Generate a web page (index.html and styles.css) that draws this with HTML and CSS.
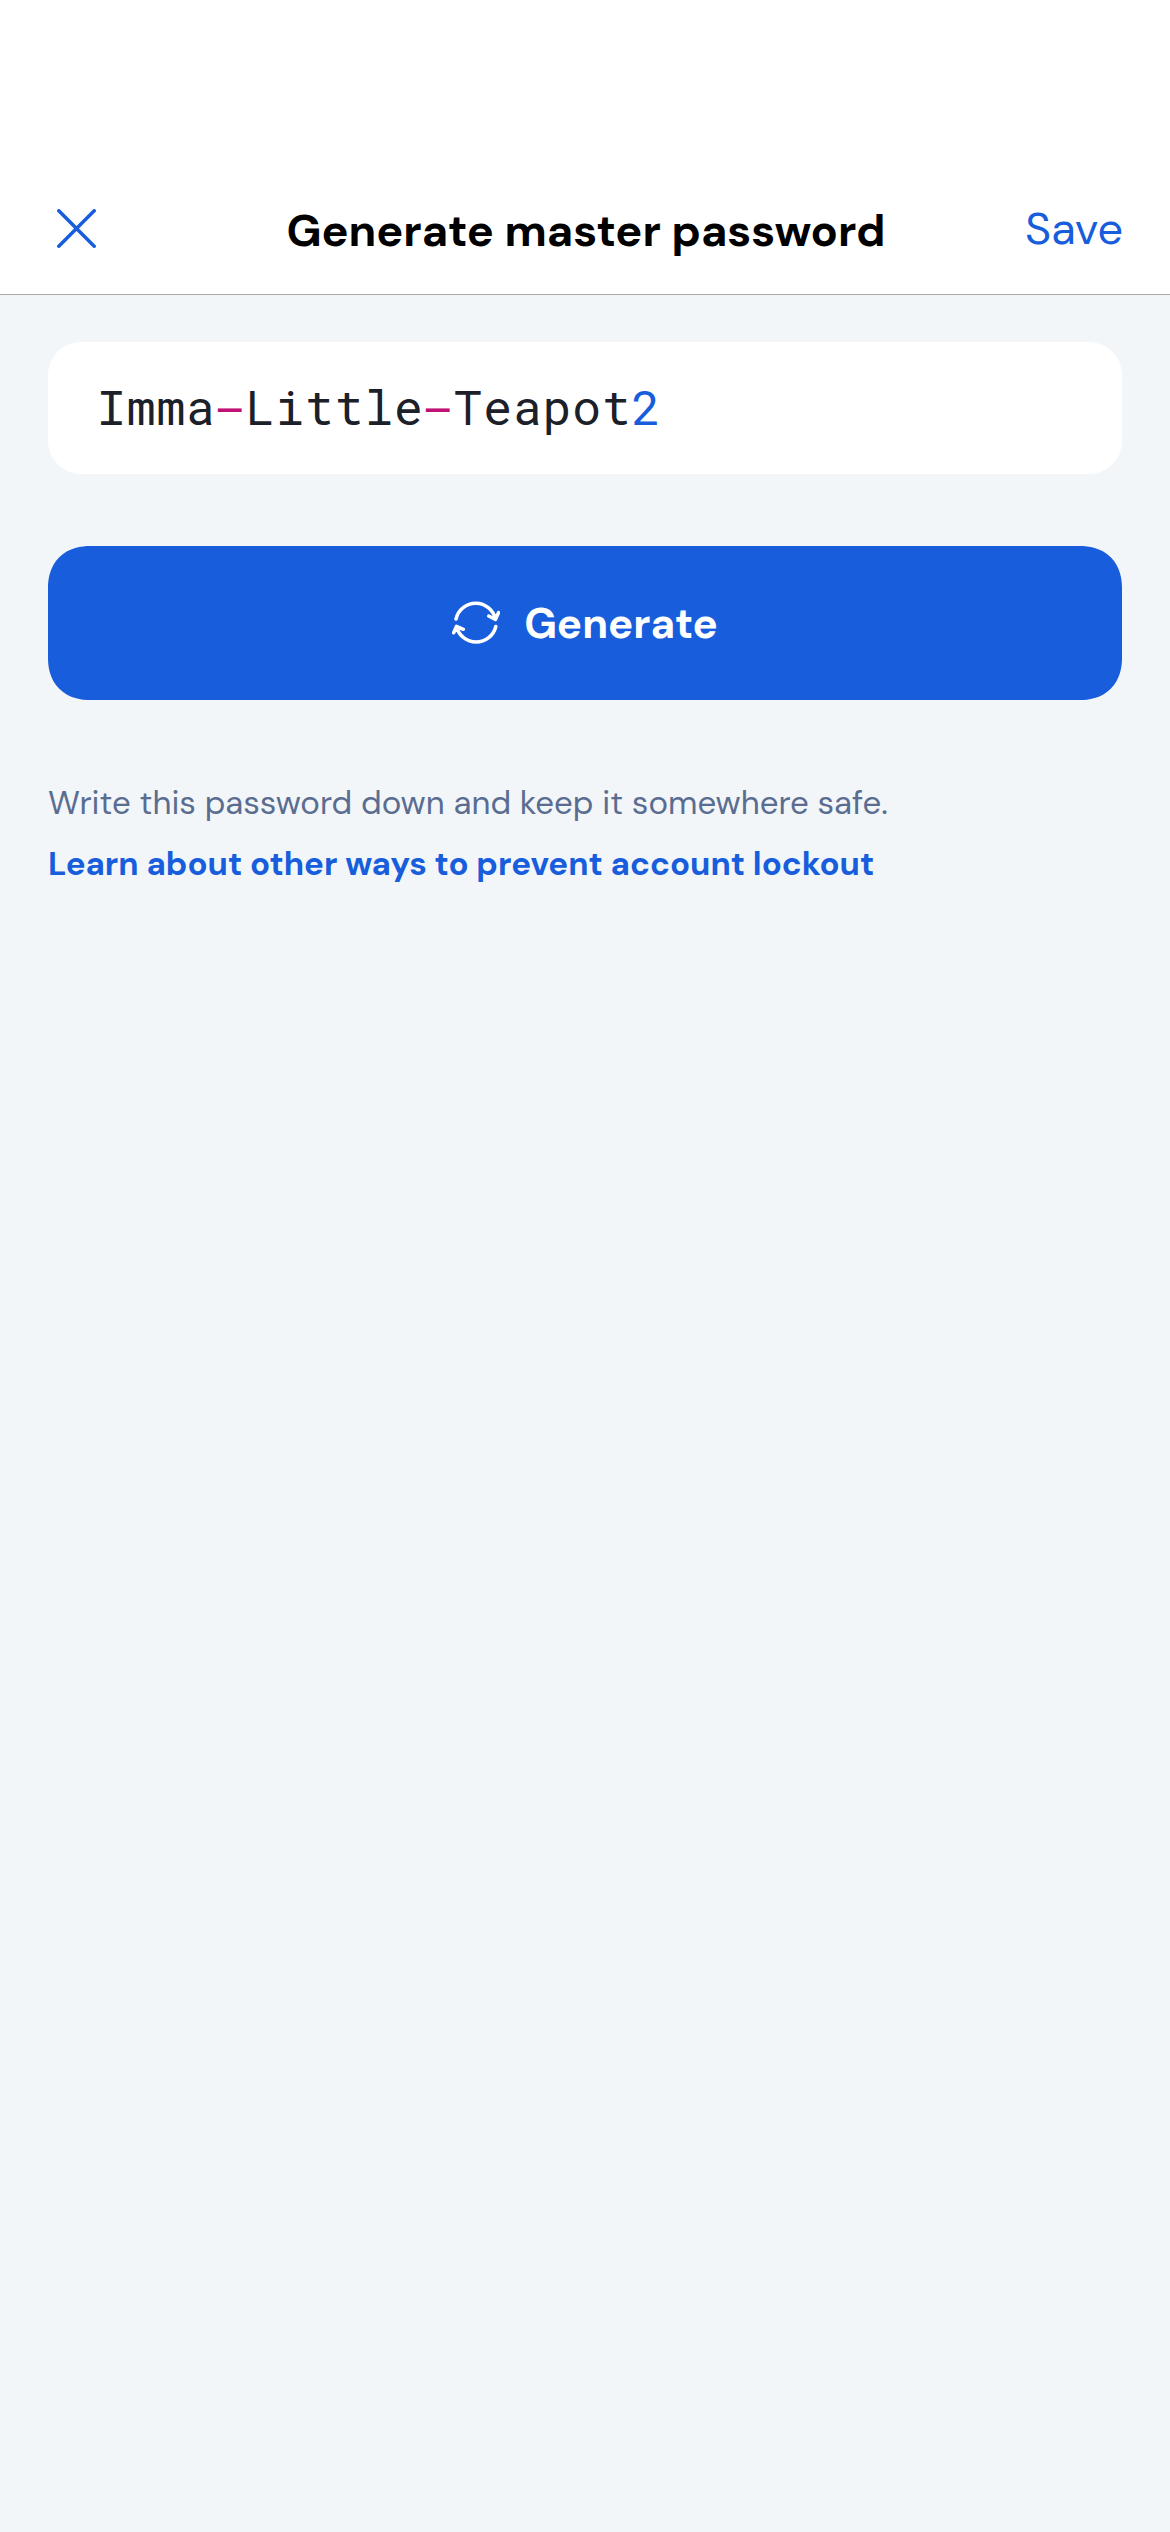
FILE: index.html
```html
<!DOCTYPE html>
<html lang="en">
<head>
<meta charset="utf-8">
<title>Generate master password</title>
<link rel="stylesheet" href="styles.css">
</head>
<body>
<header class="header">
  <button class="close" aria-label="Close"><svg width="39" height="39" viewBox="0 0 39 39"><path d="M1.8 1.8L37.2 37.2M37.2 1.8L1.8 37.2"/></svg></button>
  <h1 class="title">Generate master password</h1>
  <button class="save">Save</button>
</header>
<main class="content">
  <div class="password"><span>Imma<b class="symbol">-</b>Little<b class="symbol">-</b>Teapot<b class="digit">2</b></span></div>
  <button class="generate">
    <svg width="48" height="44" viewBox="0 0 48 44"><path d="M4 18A20.2 20.2 0 0 1 43.5 18.5M36.8 15L43.4 18.5L46.6 11.6M43.8 25.5A20.2 20.2 0 0 1 4.5 25.5M1.7 31.8L4.5 25.3L11.3 28.3"/></svg>
    <span>Generate</span>
  </button>
  <p class="note">Write this password down and keep it somewhere safe.</p>
  <a class="link">Learn about other ways to prevent account lockout</a>
</main>
</body>
</html>
```
FILE: styles.css
```css
* { box-sizing: border-box; }
body { margin: 0; min-height: 2532px; background: #f2f6f9; font-family: "DM Sans", Inter, sans-serif; }
button { border: 0; padding: 0; background: none; font: inherit; }
svg { display: block; fill: none; stroke: currentColor; stroke-width: 3.5; stroke-linecap: round; stroke-linejoin: round; }
.header { height: 295px; padding: 162px 47px 0 48px; display: grid; grid-template-columns: 200px 1fr 199px; align-items: center; background: #fff; border-bottom: 1px solid #a7a9ab; }
.close { padding-left: 9px; color: #175ddc; }
.title { margin: 0; padding-top: 6px; text-align: center; font-size: 45px; line-height: 54px; font-weight: 700; white-space: nowrap; }
.save { padding-top: 2px; text-align: right; color: #175ddc; font-size: 45px; line-height: 54px; }
.content { padding: 47px 48px 0; }
.password { height: 132px; padding: 0 49px 3px; display: flex; align-items: center; border-radius: 33px; background: #fff; color: #1b2029; font-family: "SF Mono", "Roboto Mono", "DejaVu Sans Mono", monospace; font-size: 48px; letter-spacing: 0.9px; }
.password b { font-weight: 400; }
.password .symbol { display: inline-block; color: #c01176; transform: scaleX(1.33); }
.password .digit { color: #175ddc; }
.generate { width: 100%; height: 154px; margin-top: 72px; display: flex; align-items: center; justify-content: center; gap: 24px; border-radius: 42px; corner-shape: superellipse(1.15); background: #175ddc; color: #fff; font-size: 42px; font-weight: 700; }
.note { margin: 72px 0 0; color: #5a6d91; font-size: 33px; line-height: 61px; }
.link { display: block; color: #175ddc; font-size: 33px; line-height: 61px; font-weight: 700; }
```
